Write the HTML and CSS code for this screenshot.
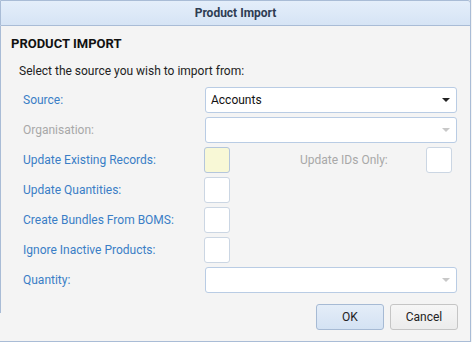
FILE: index.html
```html
<!DOCTYPE html>
<html lang="en">
<head>
  <meta charset="UTF-8" />
  <title>Product Import</title>
  <link rel="stylesheet" href="styles.css">
</head>
<body>
  <div class="window">
    <div class="titlebar">Product Import</div>
    <div class="panel">
      <h1>PRODUCT IMPORT</h1>
      <p class="intro">Select the source you wish to import from:</p>
      <div class="form">
        <div class="row">
          <label class="lbl">Source:</label>
          <div class="combo"><span>Accounts</span><i class="arrow"></i></div>
        </div>
        <div class="row">
          <label class="lbl off">Organisation:</label>
          <div class="combo"><span></span><i class="arrow off"></i></div>
        </div>
        <div class="row">
          <label class="lbl">Update Existing Records:</label>
          <div class="check yellow"></div>
          <label class="lbl off sub">Update IDs Only:</label>
          <div class="check"></div>
        </div>
        <div class="row">
          <label class="lbl">Update Quantities:</label>
          <div class="check"></div>
        </div>
        <div class="row">
          <label class="lbl">Create Bundles From BOMS:</label>
          <div class="check"></div>
        </div>
        <div class="row">
          <label class="lbl">Ignore Inactive Products:</label>
          <div class="check"></div>
        </div>
        <div class="row">
          <label class="lbl">Quantity:</label>
          <div class="combo"><span></span><i class="arrow off"></i></div>
        </div>
      </div>
    </div>
    <div class="buttons">
      <button class="btn primary">OK</button>
      <button class="btn">Cancel</button>
    </div>
  </div>
</body>
</html>
```

FILE: styles.css
```css
body {
  margin: 0;
  background: #f4f4f4;
  font-family: Roboto, "Liberation Sans", sans-serif;
  font-size: 12px;
}

.window {
  width: 471px;
  height: 342px;
  box-sizing: border-box;
  border-right: 1px solid #a9bcd6;
  border-bottom: 1px solid #a9bcd6;
  background: #f4f4f4;
}

.titlebar {
  height: 26px;
  box-sizing: border-box;
  margin-right: -1px;
  border: 1px solid #a9bcd6;
  border-top-right-radius: 3px;
  background: linear-gradient(#e4eefa, #d6e4f5);
  color: #2e3c52;
  font-weight: bold;
  text-align: center;
  line-height: 24px;
}

.panel {
  height: 287px;
  box-sizing: border-box;
  border-left: 1px solid #a9bcd6;
  padding: 10px 0 0 10px;
}

h1 {
  margin: 0;
  font-size: 13px;
  line-height: 16px;
  font-weight: bold;
  color: #111;
}

.intro {
  margin: 11px 0 0 8px;
  line-height: 16px;
  color: #222;
}

.form {
  margin-top: 8px;
  padding-left: 12px;
  display: flex;
  flex-direction: column;
  gap: 4px;
}

.row {
  display: flex;
  align-items: center;
  height: 26px;
}

.lbl {
  width: 181px;
  color: #3a7ec6;
}

.lbl.off {
  color: #a8a8a8;
}

.lbl.sub {
  width: 88px;
  margin-left: 70px;
  margin-right: 38px;
}

.combo {
  width: 252px;
  height: 26px;
  box-sizing: border-box;
  margin-left: 1px;
  border: 1px solid #b9cce4;
  border-radius: 3px;
  background: #fff;
  display: flex;
  align-items: center;
  justify-content: space-between;
  padding: 0 6px 0 5px;
  color: #111;
}

.arrow {
  width: 0;
  height: 0;
  border-left: 4px solid transparent;
  border-right: 4px solid transparent;
  border-top: 4px solid #222;
}

.arrow.off {
  border-top-color: #c8c8c8;
}

.check {
  width: 26px;
  height: 26px;
  box-sizing: border-box;
  border: 1px solid #cbd6e3;
  border-radius: 3px;
  background: #fff;
}

.check.yellow {
  background: #f8f8d6;
  border-color: #b4c6dc;
}

.buttons {
  margin-top: -9px;
  padding-right: 12px;
  display: flex;
  justify-content: flex-end;
  gap: 6px;
}

.btn {
  width: 68px;
  height: 26px;
  border: 1px solid #c5c5c5;
  border-radius: 3px;
  background: linear-gradient(#f6f6f6, #ececec);
  font-family: Roboto, "Liberation Sans", sans-serif;
  font-size: 12px;
  color: #222;
  padding: 0;
}

.btn.primary {
  border-color: #a6bad4;
  background: linear-gradient(#e4edf8, #d4e2f3);
}
```
